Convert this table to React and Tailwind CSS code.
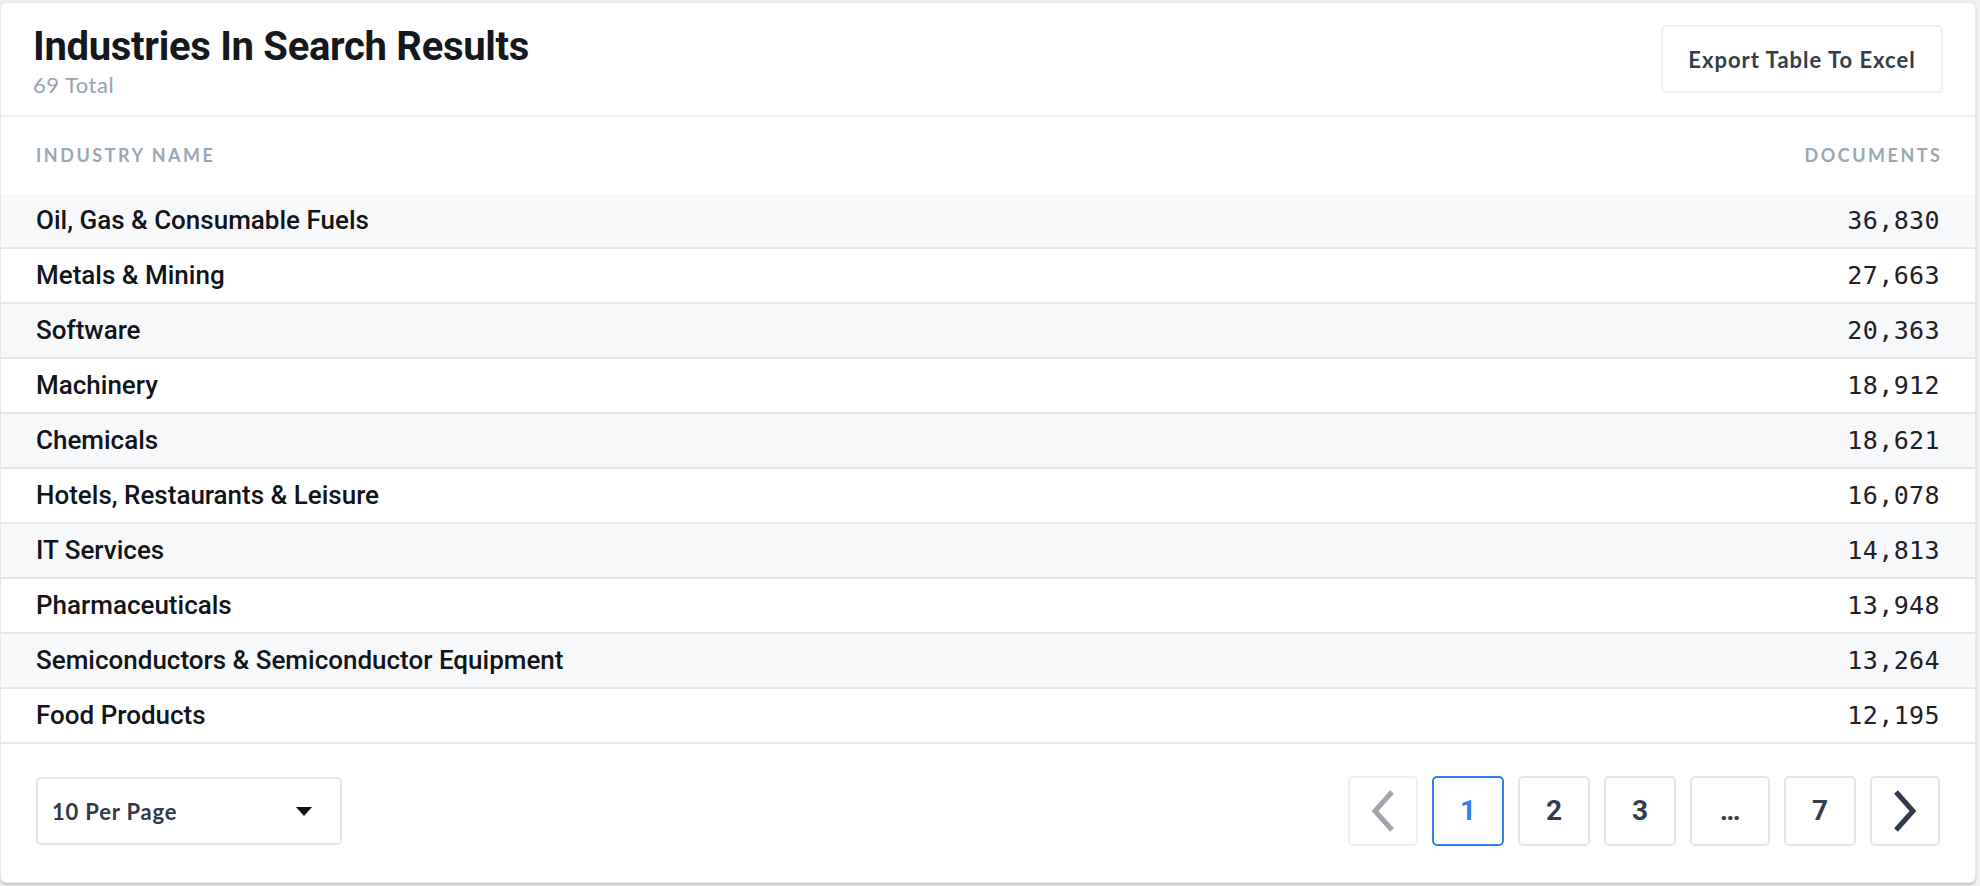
import React from 'react';

const rows = [
    { name: 'Oil, Gas & Consumable Fuels', docs: '36,830' },
    { name: 'Metals & Mining', docs: '27,663' },
    { name: 'Software', docs: '20,363' },
    { name: 'Machinery', docs: '18,912' },
    { name: 'Chemicals', docs: '18,621' },
    { name: 'Hotels, Restaurants & Leisure', docs: '16,078' },
    { name: 'IT Services', docs: '14,813' },
    { name: 'Pharmaceuticals', docs: '13,948' },
    { name: 'Semiconductors & Semiconductor Equipment', docs: '13,264' },
    { name: 'Food Products', docs: '12,195' },
];

const Chevron = ({ dir, color }) => (
    <svg width="34" height="44" viewBox="0 0 34 44" fill="none">
        <path
            d={dir === 'left' ? 'M26 3 L9 22 L26 41' : 'M8 3 L25 22 L8 41'}
            stroke={color}
            strokeWidth="5"
        />
    </svg>
);

const PageBtn = ({ children, active, wide }) => (
    <button
        className={`${wide ? 'w-[80px]' : 'w-[72px]'} h-[70px] flex items-center justify-center rounded-[5px] border-2 text-[28px] font-bold ${active ? 'border-[#2f80ed] text-[#2f80ed]' : 'border-[#e3e7ec] text-[#333d4b]'}`}
        style={{ fontFamily: 'Roboto, sans-serif' }}
    >
        {children}
    </button>
);

const App = () => {
    return (
        <div className="w-[1980px] h-[886px] bg-[#eef0f2] pr-[4px] pt-[2px]" style={{ fontFamily: 'Lato, "Liberation Sans", sans-serif' }}>
            <div className="bg-white rounded-[6px] border border-[#e6e9ec] shadow-[0_2px_2px_rgba(0,0,0,0.18)] h-[881px] flex flex-col">
                {/* header */}
                <div className="h-[114px] flex justify-between items-start px-[32px] border-b-2 border-[#eef0f2]">
                    <div className="pt-[22px]">
                        <h1 className="text-[40px] leading-[44px] font-bold text-[#15181d] tracking-[-0.3px]" style={{ fontFamily: 'Roboto, sans-serif' }}>
                            Industries In Search Results
                        </h1>
                        <div className="text-[22px] leading-[32px] tracking-[0.5px] text-[#97a4ae]">69 Total</div>
                    </div>
                    <button className="mt-[22px] w-[282px] h-[68px] rounded-[5px] border-2 border-[#eef0f2] text-[22px] tracking-[1px] font-bold text-[#333d4b]">
                        Export Table To Excel
                    </button>
                </div>

                {/* column headings */}
                <div className="h-[77px] flex items-center justify-between px-[35px] text-[18px] font-bold tracking-[2.5px] text-[#9aa8b4]">
                    <span>INDUSTRY NAME</span>
                    <span className="-mr-[2.5px]">DOCUMENTS</span>
                </div>

                {/* rows */}
                <div>
                    {rows.map((r, i) => (
                        <div
                            key={r.name}
                            className={`h-[55px] flex items-center justify-between px-[35px] border-b-2 border-[#e4e8ec] ${i % 2 === 0 ? 'bg-[#f7f8fa]' : 'bg-white'}`}
                        >
                            <span className="text-[26px] font-medium text-[#111418]" style={{ fontFamily: 'Roboto, sans-serif' }}>
                                {r.name}
                            </span>
                            <span className="text-[25px] text-[#1d2126] tracking-[0.4px]" style={{ fontFamily: '"DejaVu Sans Mono", monospace' }}>
                                {r.docs}
                            </span>
                        </div>
                    ))}
                </div>

                {/* footer */}
                <div className="flex-1 flex items-center justify-between px-[35px] pb-[4px]">
                    <div className="w-[306px] h-[68px] rounded-[5px] border-2 border-[#e3e7ec] flex items-center justify-between pl-[14px] pr-[28px]">
                        <span className="text-[22px] tracking-[0.8px] font-bold text-[#2f3b4c]">10 Per Page</span>
                        <svg width="16" height="9" viewBox="0 0 16 9">
                            <path d="M0 0 H16 L8 9 Z" fill="#111" />
                        </svg>
                    </div>
                    <div className="flex items-center gap-[14px]">
                        <button className="w-[70px] h-[70px] flex items-center justify-center rounded-[5px] border-2 border-[#eef1f4]">
                            <Chevron dir="left" color="#a0a5ab" />
                        </button>
                        <PageBtn active>1</PageBtn>
                        <PageBtn>2</PageBtn>
                        <PageBtn>3</PageBtn>
                        <PageBtn wide>…</PageBtn>
                        <PageBtn>7</PageBtn>
                        <button className="w-[70px] h-[70px] flex items-center justify-center rounded-[5px] border-2 border-[#e3e7ec]">
                            <Chevron dir="right" color="#2f3a4a" />
                        </button>
                    </div>
                </div>
            </div>
        </div>
    );
};

export default App;
